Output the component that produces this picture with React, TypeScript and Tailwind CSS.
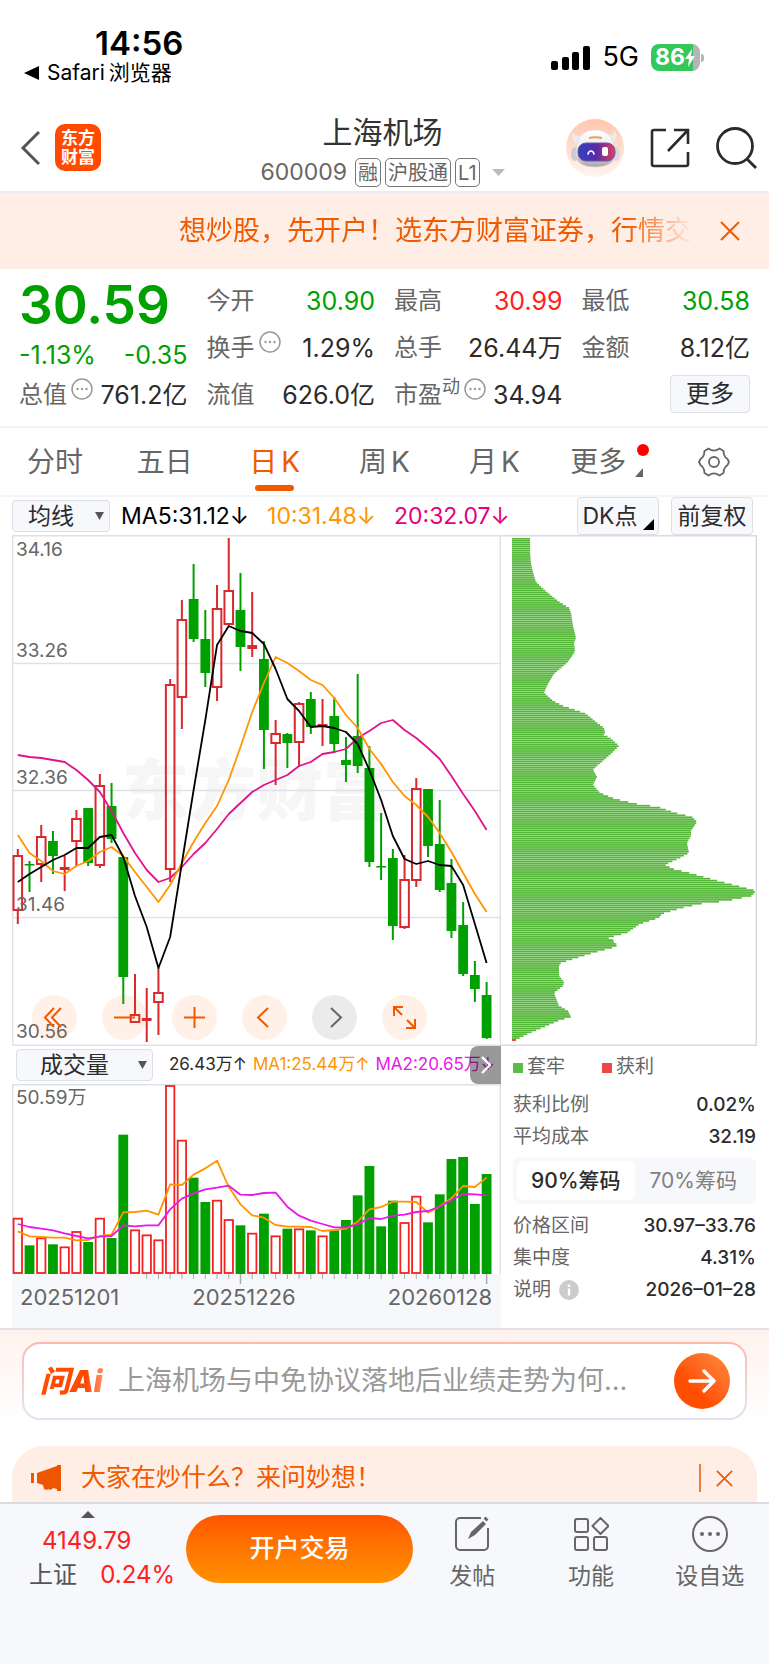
import { useState } from "react"
import type { ReactNode } from "react"

type Candle = [high: number, top: number, bottom: number, low: number, up: 0 | 1]

const STEP = 11.72
const FIRST = 5.8
const BAR = 9
const xAt = (i: number) => FIRST + i * STEP

const candles: Candle[] = [
  [314, 321, 375, 389, 1], [326, 329, 330, 357, 0], [290, 302, 329, 347, 1], [296, 306, 321, 339, 0],
  [321, 332, 335, 356, 1], [275, 284, 306, 331, 1], [273, 273, 328, 331, 0], [239, 251, 330, 333, 1],
  [248, 271, 304, 308, 0], [322, 322, 442, 469, 0], [439, 480, 487, 487, 1], [453, 483, 486, 507, 1],
  [433, 458, 467, 500, 1], [144, 150, 334, 347, 1], [65, 85, 162, 194, 1], [29, 64, 104, 107, 0],
  [75, 104, 138, 152, 0], [50, 74, 152, 166, 1], [3, 56, 89, 90, 1], [38, 75, 112, 136, 0],
  [57, 110, 114, 122, 1], [106, 124, 195, 234, 0], [185, 199, 208, 250, 1], [198, 199, 208, 233, 0],
  [167, 169, 207, 232, 1], [157, 164, 192, 199, 0], [164, 189, 191, 211, 1], [162, 181, 209, 218, 0],
  [202, 225, 230, 247, 0], [139, 201, 231, 238, 0], [211, 233, 327, 332, 0], [278, 331, 332, 345, 0],
  [314, 323, 391, 405, 0], [320, 345, 392, 394, 1], [243, 254, 345, 352, 1], [254, 254, 311, 322, 0],
  [265, 309, 355, 357, 0], [324, 348, 396, 403, 0], [367, 390, 439, 441, 0], [426, 440, 454, 467, 0],
  [447, 460, 503, 504, 0],
]

const ma5 = [347, 339, 332, 325, 320, 313, 313, 302, 300, 322, 361, 392, 433, 402, 328, 255, 185, 110, 91, 96, 98, 109, 134, 164, 176, 192, 191, 193, 197, 209, 235, 265, 301, 324, 329, 326, 330, 331, 350, 389, 428]
const ma10 = [300, 318, 326, 336, 339, 331, 326, 317, 312, 321, 337, 352, 367, 350, 328, 307, 288, 271, 245, 212, 177, 148, 122, 128, 136, 145, 150, 163, 180, 193, 214, 229, 247, 261, 270, 282, 298, 317, 338, 359, 377]
const ma20 = [220, 222, 223, 225, 227, 235, 245, 257, 276, 298, 318, 335, 347, 343, 332, 319, 308, 294, 279, 268, 257, 250, 245, 240, 231, 227, 219, 217, 214, 203, 196, 188, 185, 195, 203, 213, 224, 241, 259, 276, 295]

const volumes = [169, 86, 110, 89, 83, 129, 96, 169, 108, 418, 134, 119, 104, 567, 403, 289, 216, 223, 165, 146, 124, 181, 116, 136, 137, 131, 116, 131, 162, 236, 324, 143, 220, 156, 235, 155, 239, 345, 351, 210, 300]
const volumeMa1 = [128, 113, 111, 109, 109, 101, 102, 114, 118, 185, 186, 190, 178, 269, 267, 298, 317, 340, 261, 209, 176, 169, 147, 142, 142, 141, 129, 132, 136, 157, 194, 201, 217, 217, 216, 184, 203, 227, 264, 261, 289]
const volumeMa2 = [150, 141, 136, 131, 122, 114, 107, 112, 114, 146, 143, 146, 146, 194, 226, 242, 254, 259, 265, 238, 237, 243, 244, 202, 175, 160, 150, 140, 140, 149, 168, 165, 175, 178, 186, 189, 202, 222, 240, 239, 236]

// [y, width] outline of the chip distribution
const chips: [number, number][] = [
  [3, 18], [15, 18], [28, 19], [40, 22], [46, 24], [50, 28], [58, 37], [66, 47], [72, 57], [77, 59],
  [90, 61], [102, 64], [107, 62], [115, 63], [119, 61], [127, 55], [138, 42], [148, 36], [157, 32],
  [165, 41], [170, 51], [175, 66], [178, 74], [187, 85], [192, 92], [197, 93], [198, 90], [202, 98],
  [210, 107], [217, 100], [225, 91], [230, 85], [234, 81], [241, 85], [249, 81], [257, 88], [263, 103],
  [268, 125], [271, 146], [277, 163], [281, 180], [286, 185], [295, 179], [300, 179], [307, 175],
  [317, 177], [322, 168], [329, 153], [333, 161], [338, 181], [345, 206], [352, 233], [355, 244],
  [360, 240], [365, 215], [368, 188], [372, 170], [378, 150], [382, 147], [388, 128], [397, 115],
  [402, 96], [405, 103], [407, 101], [409, 107], [412, 100], [417, 81], [427, 49], [430, 47], [440, 47],
  [446, 52], [450, 51], [457, 42], [470, 47], [475, 56], [481, 59], [485, 46], [492, 30], [498, 16],
  [504, 4],
]

const CHIP_PITCH = 1.92
const chipRows = Array.from({ length: 261 }, (_, n) => {
  const y = 3 + n * CHIP_PITCH
  const k = Math.max(1, chips.findIndex((p) => p[0] >= y))
  const [y0, w0] = chips[k - 1]
  const [y1, w1] = chips[k]
  return { y, w: w0 + ((w1 - w0) * (y - y0)) / (y1 - y0) }
})

const line = (values: number[], toY = (v: number) => v) =>
  values.map((v, i) => `${xAt(i)},${toY(v)}`).join(" ")

const volumeY = (v: number) => 190 - v / 3

const Triangle = ({ className = "" }: { className?: string }) => (
  <svg viewBox="0 0 10 9" preserveAspectRatio="none" className={className} fill="currentColor" aria-hidden="true">
    <path d="M0 0h10L5 9z" />
  </svg>
)

const More = () => (
  <svg viewBox="0 0 22 22" className="mb-3 h-[22px] w-[22px] shrink-0 text-[#999]" aria-hidden="true">
    <circle cx="11" cy="11" r="10" fill="none" stroke="currentColor" strokeWidth="1.5" />
    <g fill="currentColor">
      <circle cx="6.5" cy="11" r="1.2" />
      <circle cx="11" cy="11" r="1.2" />
      <circle cx="15.5" cy="11" r="1.2" />
    </g>
  </svg>
)

const Close = ({ className = "" }: { className?: string }) => (
  <svg viewBox="0 0 20 20" className={className} fill="none" stroke="#f05a00" strokeWidth="2">
    <path d="M1 1l18 18M19 1L1 19" />
  </svg>
)

const StatusBar = () => (
  <div className="flex h-[100px] justify-between pl-6 pr-[65px]">
    <div className="pt-[27px]">
      <p className="pl-[71px] text-[33px] font-semibold leading-8">14:56</p>
      <p className="flex items-center gap-2 text-[21px] leading-7">
        <svg viewBox="0 0 15 14" className="h-[14px] w-[15px]" aria-hidden="true">
          <path d="M15 0v14L0 7z" />
        </svg>
        <span>Safari<span className="ml-1">浏览器</span></span>
      </p>
    </div>
    <div className="mt-11 flex h-[27px] items-center gap-3">
      <svg viewBox="0 0 39 24" className="h-6 w-[39px]" aria-hidden="true">
        <rect x="0" y="15" width="7" height="9" rx="2" />
        <rect x="11" y="11" width="7" height="13" rx="2" />
        <rect x="21" y="6" width="7" height="18" rx="2" />
        <rect x="32" y="0" width="7" height="24" rx="2" />
      </svg>
      <span className="text-[27px]">5G</span>
      <div className="flex items-center gap-px">
        <span className="flex h-[27px] w-[49px] items-center rounded-lg bg-linear-to-r from-[#34c759] from-86% to-[#b5b5b5] to-86% pl-1 text-[23px] font-bold text-white">
          86
          <svg viewBox="0 0 10 18" className="h-[18px] w-[10px]" fill="#fff" aria-hidden="true">
            <path d="M7 0L0 10h4l-1 8 7-11H6z" />
          </svg>
        </span>
        <span className="h-2 w-[3px] rounded-r bg-[#b5b5b5]" />
      </div>
    </div>
  </div>
)

const Robot = () => (
  <svg viewBox="0 0 58 58" className="h-[58px] w-[58px]" aria-hidden="true">
    <defs>
      <linearGradient id="halo" x1="0" y1="0" x2="0" y2="1">
        <stop offset="0" stopColor="#ffc6ac" />
        <stop offset="1" stopColor="#fff5f0" />
      </linearGradient>
      <linearGradient id="shell" x1="0" y1="0" x2="0" y2="1">
        <stop offset="0" stopColor="#ffffff" />
        <stop offset="0.6" stopColor="#eae6ea" />
        <stop offset="1" stopColor="#aaa2ac" />
      </linearGradient>
      <linearGradient id="visor" x1="0" y1="0" x2="1" y2="0">
        <stop offset="0" stopColor="#2e45c4" />
        <stop offset="0.5" stopColor="#5a2aa8" />
        <stop offset="1" stopColor="#e0405f" />
      </linearGradient>
    </defs>
    <circle cx="29" cy="29" r="29" fill="url(#halo)" />
    <path d="M6 13c0 6 1 9 5 12l5-8c-4 1-8-1-10-4zM49 12c3 5 1 9-3 12l-6-7c5 0 8-2 9-5z" fill="#efeaf0" />
    <ellipse cx="9" cy="35" rx="4" ry="7" fill="#cfcad3" />
    <ellipse cx="50" cy="35" rx="4" ry="7" fill="#ddd8e0" />
    <path d="M11 27c1-11 8-16 18-16s18 5 19 16l1 9c0 8-9 12-20 12S10 44 10 36z" fill="url(#shell)" stroke="#ddd5dc" strokeWidth="0.6" />
    <path d="M23 18c4-1 9-1 13 0v2c-4-1-9-1-13 0z" fill="#ee9a52" />
    <rect x="12" y="24" width="37" height="18" rx="8" fill="url(#visor)" stroke="#6b5a9a" strokeWidth="1" />
    <path d="M22 35c1-4 5-4 6 0" fill="none" stroke="#fff" strokeWidth="1.6" strokeLinecap="round" />
    <rect x="36" y="28" width="6" height="9" rx="2" fill="#fff" />
  </svg>
)

const Header = () => (
  <header className="grid h-[93px] grid-cols-[1fr_auto_1fr] items-center border-b-2 border-[#ececee] pl-5 pr-3 pt-1">
    <div className="flex items-center gap-[15px]">
      <button aria-label="返回">
        <svg viewBox="0 0 20 34" className="h-[34px] w-5" fill="none" stroke="#555" strokeWidth="3">
          <path d="M19 1L3 17l16 16" />
        </svg>
      </button>
      <div className="grid h-[47px] w-[46px] place-items-center content-center rounded-[10px] bg-[#ff4a00] text-[17px] font-bold leading-[19px] text-white">
        <span>东方</span>
        <span>财富</span>
      </div>
    </div>
    <div className="flex flex-col items-center pr-3 pt-1">
      <h1 className="text-[30px] leading-[46px] text-[#333]">上海机场</h1>
      <div className="flex h-9 items-center gap-1 text-[20px] text-[#666]">
        <span className="mr-1 text-[23px]">600009</span>
        {["融", "沪股通", "L1"].map((tag) => (
          <span key={tag} className="flex h-[29px] items-center rounded-[5px] border-[1.5px] border-[#777] px-0.5">
            {tag}
          </span>
        ))}
        <Triangle className="ml-2 h-[7px] w-[13px] text-[#bbb]" />
      </div>
    </div>
    <div className="flex items-center justify-end gap-[26px]">
      <button aria-label="智能助手">
        <Robot />
      </button>
      <button aria-label="分享">
        <svg viewBox="0 0 40 40" className="h-10 w-10" fill="none" stroke="#2b2b2b" strokeWidth="2.6">
          <path d="M16 2H4a2 2 0 0 0-2 2v32a2 2 0 0 0 2 2h32a2 2 0 0 0 2-2V24M24 2h14v14M38 2L18 23" />
        </svg>
      </button>
      <button aria-label="搜索">
        <svg viewBox="0 0 41 42" className="h-[42px] w-[41px]" fill="none" stroke="#2b2b2b" strokeWidth="2.8">
          <circle cx="19" cy="19" r="17.5" />
          <path d="M31 32l9 9" />
        </svg>
      </button>
    </div>
  </header>
)

const Banner = () => (
  <div className="flex h-[76px] items-center justify-between bg-[#feeee6] pl-[179px] pr-[29px]">
    <a
      href="#open"
      className="min-w-0 flex-1 overflow-hidden whitespace-nowrap text-[27px] text-[#f05a00] [mask-image:linear-gradient(to_right,black_87%,transparent)]"
    >
      想炒股，先开户！选东方财富证券，行情交
    </a>
    <button aria-label="关闭" className="ml-7">
      <Close className="h-5 w-5" />
    </button>
  </div>
)

const Stat = ({ label, value, color = "text-[#2b2b2b]" }: { label: ReactNode; value: string; color?: string }) => (
  <div className="flex h-[47px] items-center justify-between whitespace-nowrap">
    <dt className="flex items-center text-[#666]">{label}</dt>
    <dd className={`text-[25px] ${color}`}>{value}</dd>
  </div>
)

const Quote = () => (
  <section className="grid grid-cols-4 gap-x-[19px] border-b-2 border-[#f2f3f6] px-[19px] py-2 text-[24px] leading-8">
    <div>
      <p className="h-[57px] text-[53px] font-semibold leading-[57px] text-[#00a000]">30.59</p>
      <p className="flex h-[37px] items-center justify-between pt-1 text-[25px] text-[#00a000]">
        <span>-1.13%</span>
        <span>-0.35</span>
      </p>
      <dl>
        <Stat label={<><span className="mr-1">总值</span><More /></>} value="761.2亿" />
      </dl>
    </div>
    <dl>
      <Stat label="今开" value="30.90" color="text-[#00a000]" />
      <Stat label={<><span className="mr-1">换手</span><More /></>} value="1.29%" />
      <Stat label="流值" value="626.0亿" />
    </dl>
    <dl>
      <Stat label="最高" value="30.99" color="text-[#ff2020]" />
      <Stat label="总手" value="26.44万" />
      <Stat
        label={<>市盈<span className="mb-4 mr-1 text-[18px] leading-5">动</span><More /></>}
        value="34.94"
      />
    </dl>
    <div>
      <dl>
        <Stat label="最低" value="30.58" color="text-[#00a000]" />
        <Stat label="金额" value="8.12亿" />
      </dl>
      <button className="ml-auto mt-1 block h-[38px] w-20 rounded border border-[#dcdfe6] bg-[#f7f8fb] text-[#2b2b2b]">
        更多
      </button>
    </div>
  </section>
)

const tabs = ["分时", "五日", "日K", "周K", "月K", "更多"]

const PeriodTabs = () => {
  const [active, setActive] = useState("日K")

  return (
    <nav className="grid h-[69px] grid-cols-7 border-b-2 border-[#f5f5f8] text-[28px] text-[#666]">
      {tabs.map((tab) => (
        <button
          key={tab}
          onClick={() => setActive(tab)}
          className={`relative flex items-center justify-center ${tab === active ? "text-[#f05a00]" : ""} ${tab === "更多" ? "pr-3" : ""}`}
        >
          {tab.endsWith("K") ? <>{tab[0]}<span className="ml-1">K</span></> : tab}
          {tab === active && <span className="absolute bottom-1 h-[6px] w-[39px] rounded-full bg-[#f05a00]" />}
          {tab === "更多" && (
            <>
              <span className="absolute right-[10px] top-4 h-3 w-3 rounded-full bg-[#ff0000]" />
              <svg viewBox="0 0 8 9" className="absolute bottom-[18px] right-4 h-[9px] w-2" fill="#666" aria-hidden="true">
                <path d="M8 0v9H0z" />
              </svg>
            </>
          )}
        </button>
      ))}
      <button aria-label="设置" className="grid place-items-center">
        <svg viewBox="0 0 32 30" className="h-[30px] w-8" fill="none" stroke="#666" strokeWidth="1.8" strokeLinejoin="round">
          <path d="M10.500 1.500L13.500 3.200Q16 4 18.500 3.200L21.500 1.500L25.500 4L26 7.500Q27 10.500 29.500 12L31 15L29.500 18Q27 19.500 26 22.500L25.500 26L21.500 28.500L18.500 26.800Q16 26 13.500 26.800L10.500 28.500L6.500 26L6 22.500Q5 19.500 2.500 18L1 15L2.500 12Q5 10.500 6 7.500L6.500 4Z" />
          <circle cx="16" cy="15" r="5" />
        </svg>
      </button>
    </nav>
  )
}

const IndicatorSelect = ({ label, value, className }: { label: string; value: string; className: string }) => (
  <div className={`relative flex items-center ${className}`}>
    <select
      aria-label={label}
      className="h-full w-full appearance-none rounded border-[1.5px] border-[#dcdfe6] bg-[#f7f8fb] pr-5 text-center text-[23px] leading-7 text-[#2b2b2b]"
    >
      <option>{value}</option>
    </select>
    <Triangle className="pointer-events-none absolute right-[6px] h-2 w-[9px] text-[#555]" />
  </div>
)

const AverageRow = () => (
  <div className="mx-3 flex h-[38px] items-center whitespace-nowrap text-[23px]">
    <IndicatorSelect label="主图指标" value="均线" className="h-8 w-[98px]" />
    <span className="ml-[11px]">MA5:31.12↓</span>
    <span className="ml-[18px] text-[#ff9500]">10:31.48↓</span>
    <span className="ml-[18px] text-[#e6007e]">20:32.07↓</span>
    <button className="relative ml-auto h-[38px] w-[82px] rounded border-[1.5px] border-[#dcdfe6] bg-[#f7f8fb] pr-4 text-[#2b2b2b]">
      DK点
      <svg viewBox="0 0 11 11" className="absolute bottom-1 right-1 h-[11px] w-[11px]" aria-hidden="true">
        <path d="M11 0v11H0z" />
      </svg>
    </button>
    <button className="ml-3 mr-1 h-[38px] w-[82px] rounded border-[1.5px] border-[#dcdfe6] bg-[#f7f8fb] text-[#2b2b2b]">
      前复权
    </button>
  </div>
)

const CandleChart = () => (
  <svg viewBox="0 0 489 511" className="block h-auto w-full" role="img" aria-label="日K线">
    <text x="110" y="280" fontSize="67" fontWeight="900" fill="#f6f6f6">东方财富</text>
    <g stroke="#dde1ea" strokeWidth="1.500">
      <path d="M0 .7h489M0 128.500h489M0 255.500h489M0 382.500h489M0 510.300h489M.7 0v511M488.300 0v511" />
    </g>
    {candles.map(([high, top, bottom, low, up], i) => {
      const x = xAt(i)
      const color = up ? "#d8292f" : "#00a000"
      const hollow = up === 1 && bottom - top > 5
      return (
        <g key={i} stroke={color} strokeWidth="2">
          <path d={hollow ? `M${x} ${high}V${top}M${x} ${bottom}V${low}` : `M${x} ${high}V${low}`} />
          {hollow ? (
            <rect x={x - BAR / 2 + 0.2} y={top} width={BAR - 0.4} height={bottom - top} fill="none" />
          ) : (
            <rect x={x - BAR / 2 - 0.4} y={top} width={BAR + 0.8} height={Math.max(1.5, bottom - top)} fill={color} stroke="none" />
          )}
        </g>
      )
    })}
    <g fill="none" strokeWidth="1.800" strokeLinejoin="round">
      <polyline points={line(ma20)} stroke="#e0148c" />
      <polyline points={line(ma10)} stroke="#ff9500" />
      <polyline points={line(ma5)} stroke="#000" />
    </g>
    <g fontSize="19" fill="#666">
      <text x="4" y="21">34.16</text>
      <text x="4" y="122">33.26</text>
      <text x="4" y="249">32.36</text>
      <text x="4" y="376">31.46</text>
      <text x="4" y="503">30.56</text>
    </g>
  </svg>
)

const controls: { label: string; path: string; muted?: boolean }[] = [
  { label: "展开", path: "M22 13L13 22.500L22 32M29 13L20 22.500L29 32" },
  { label: "缩小", path: "M12 22.500h21" },
  { label: "放大", path: "M12 22.500h21M22.500 12v21" },
  { label: "左移", path: "M26 13L16 22.500L26 32" },
  { label: "右移", path: "M19 13L29 22.500L19 32", muted: true },
  { label: "全屏", path: "M12 21V12h9M12 12l8 8M33 24v9h-9M33 33l-8-8" },
]

const ChartControls = () => (
  <div className="absolute bottom-[6px] left-5 flex gap-[25px]">
    {controls.map(({ label, path, muted }) => (
      <button
        key={label}
        aria-label={label}
        className={`h-[45px] w-[45px] rounded-full ${muted ? "bg-black/8 text-[#666]" : "bg-[#ff5a00]/9 text-[#f05a00]"}`}
      >
        <svg viewBox="0 0 45 45" fill="none" stroke="currentColor" strokeWidth="2">
          <path d={path} />
        </svg>
      </button>
    ))}
  </div>
)

const VolumeChart = () => (
  <svg viewBox="0 0 489 190" className="block h-auto w-full" role="img" aria-label="成交量">
    <path d="M0 .7h489M.7 0v190M488.300 0v190" stroke="#dde1ea" strokeWidth="1.500" />
    {volumes.map((v, i) => {
      const up = candles[i][4] === 1
      const h = v / 3
      return up ? (
        <rect key={i} x={xAt(i) - 4.2} y={191 - h} width="8.400" height={h - 2} fill="#fff" stroke="#f52222" strokeWidth="1.800" />
      ) : (
        <rect key={i} x={xAt(i) - 4.9} y={190 - h} width="9.800" height={h} fill="#00a000" />
      )
    })}
    <g fill="none" strokeWidth="1.800" strokeLinejoin="round">
      <polyline points={line(volumeMa1, volumeY)} stroke="#ff9500" />
      <polyline points={line(volumeMa2, volumeY)} stroke="#e619e6" />
    </g>
    <text x="4" y="20" fontSize="19" fill="#666">50.59万</text>
  </svg>
)

const DateAxis = () => (
  <div className="h-[54px] bg-[#f7f8fb]">
    <svg viewBox="0 0 489 10" className="block h-auto w-full" stroke="#aaa" aria-hidden="true">
      {volumes.map((_, i) => i > 10 && (
        <path key={i} d={`M${xAt(i)} 0V${i === 19 || i === 40 ? 10 : 5}`} strokeWidth={i === 19 || i === 40 ? 1.5 : 1} />
      ))}
    </svg>
    <div className="grid grid-cols-[1fr_auto_1fr] pl-2 pr-[9px] text-[22px] leading-[26px] text-[#666]">
      <span>20251201</span>
      <span className="pr-6">20251226</span>
      <span className="text-right">20260128</span>
    </div>
  </div>
)

const ChipChart = () => (
  <svg viewBox="0 0 256 511" className="block h-auto w-full" role="img" aria-label="筹码分布">
    <path d="M0 .7h255.300V510.300H0" fill="none" stroke="#d9dae2" strokeWidth="1.500" />
    <g fill="#55b83a">
      {chipRows.map(({ y, w }) => (
        <rect key={y} x="11" y={y} width={w} height="1.700" />
      ))}
    </g>
    <rect x="11" y="504" width="4" height="2" fill="#ee4646" />
  </svg>
)

const InfoRow = ({ label, value }: { label: ReactNode; value: string }) => (
  <div className="flex h-8 items-center justify-between">
    <dt className="flex items-center gap-2 text-[#666]">{label}</dt>
    <dd className="font-medium text-[#2b2b2b]">{value}</dd>
  </div>
)

const ChipPanel = () => {
  const [range, setRange] = useState("90%筹码")

  return (
    <div className="pl-3 pr-px text-[19px]">
      <div className="flex h-[43px] items-center gap-[37px] text-[#666]">
        <span className="flex items-center gap-1">
          <i className="h-[10px] w-[10px] bg-[#5bbd46]" />套牢
        </span>
        <span className="flex items-center gap-1">
          <i className="h-[10px] w-[10px] bg-[#ee4646]" />获利
        </span>
      </div>
      <dl>
        <InfoRow label="获利比例" value="0.02%" />
        <InfoRow label="平均成本" value="32.19" />
      </dl>
      <div className="mb-[6px] mt-1 flex h-[47px] rounded-lg bg-[#f7f8fb] p-1 text-[21px]">
        {["90%筹码", "70%筹码"].map((item) => (
          <button
            key={item}
            onClick={() => setRange(item)}
            className={`flex-1 rounded-md ${item === range ? "bg-white font-medium text-[#2b2b2b]" : "text-[#808080]"}`}
          >
            {item}
          </button>
        ))}
      </div>
      <dl>
        <InfoRow label="价格区间" value="30.97–33.76" />
        <InfoRow label="集中度" value="4.31%" />
        <InfoRow
          label={
            <>
              说明
              <svg viewBox="0 0 20 20" className="h-5 w-5" aria-hidden="true">
                <circle cx="10" cy="10" r="10" fill="#ccc" />
                <path d="M10 4.500v2.500M10 8.500v7" stroke="#fff" strokeWidth="2.400" />
              </svg>
            </>
          }
          value="2026–01–28"
        />
      </dl>
    </div>
  )
}

const Charts = () => (
  <section className="mx-3 grid grid-cols-[489fr_256fr]">
    <div>
      <div className="relative">
        <CandleChart />
        <ChartControls />
      </div>
      <div className="relative flex h-[38px] items-center overflow-hidden whitespace-nowrap pl-1 text-[17px]">
        <IndicatorSelect label="副图指标" value="成交量" className="h-8 w-[137px]" />
        <span className="ml-4 text-[#2b2b2b]">26.43万↑</span>
        <span className="ml-[6px] text-[#ff9500]">MA1:25.44万↑</span>
        <span className="ml-[6px] text-[#e619e6]">MA2:20.65万↓</span>
        <button aria-label="更多指标" className="absolute inset-y-0 right-0 grid w-[31px] place-items-center rounded-l-lg bg-black/40">
          <svg viewBox="0 0 10 18" className="h-[18px] w-[10px]" fill="none" stroke="#fff" strokeWidth="2.400">
            <path d="M1 1l8 8-8 8" />
          </svg>
        </button>
      </div>
      <VolumeChart />
      <DateAxis />
    </div>
    <div>
      <ChipChart />
      <ChipPanel />
    </div>
  </section>
)

const AskBox = () => (
  <section className="border-t-2 border-[#e4e0e6] bg-linear-to-b from-[#fff2ee] to-white to-80% px-[22px] pb-[26px] pt-3">
    <div className="rounded-[18px] bg-linear-to-b from-[#ffb9ad] to-[#dce5f6] p-0.5">
      <form className="flex h-[74px] items-center rounded-2xl bg-white pl-4 pr-[15px]" onSubmit={(e) => e.preventDefault()}>
        <label
          htmlFor="ask"
          className="w-[78px] shrink-0 bg-linear-to-r from-[#ff4a00] from-60% to-[#ff9a66] to-85% bg-clip-text text-[30px] font-black italic text-transparent"
        >
          问Ai
        </label>
        <input
          id="ask"
          placeholder="上海机场与中免协议落地后业绩走势为何…"
          className="min-w-0 flex-1 text-[27px] outline-none placeholder:text-[#999]"
        />
        <button aria-label="发送" className="ml-9 grid h-14 w-14 shrink-0 place-items-center rounded-full bg-linear-to-bl from-[#ff8a3c] to-[#ff4e00] to-65%">
          <svg viewBox="0 0 28 24" className="h-6 w-7" fill="none" stroke="#fff" strokeWidth="3.400" strokeLinecap="round" strokeLinejoin="round">
            <path d="M2 12h23M16 2l10 10-10 10" />
          </svg>
        </button>
      </form>
    </div>
  </section>
)

const Notice = () => (
  <div className="mx-3 flex h-14 items-center rounded-t-[32px] bg-[#feeee6] pl-[19px] pr-6 pt-2 text-[25px] text-[#f05a00]">
    <svg viewBox="0 0 30 26" className="h-[26px] w-[30px]" fill="#ee5500" aria-hidden="true">
      <path d="M0 8h3v10H0zM6 8L26 1V0h4v26h-4v-2l-4-1-2 2-3-1-1 1-3-1-1-4-6-2z" />
    </svg>
    <a href="#ask" className="ml-5 flex-1">大家在炒什么？来问妙想！</a>
    <span className="mr-[15px] h-7 w-0.5 bg-[#f07a3c]" />
    <button aria-label="关闭">
      <Close className="block h-[17px] w-[17px]" />
    </button>
  </div>
)

const actions = [
  {
    label: "发帖",
    icon: (
      <>
        <path d="M27 2H6a4 4 0 0 0-4 4v24a4 4 0 0 0 4 4h24a4 4 0 0 0 4-4V12" />
        <path d="M14 23l3-7L29 5l3 3-11 11z" fill="currentColor" stroke="none" />
        <path d="M31 4l2-2" strokeWidth="4" />
      </>
    ),
  },
  {
    label: "功能",
    icon: (
      <>
        <rect x="2" y="3" width="13" height="13" rx="2" />
        <rect x="2" y="21" width="13" height="13" rx="2" />
        <rect x="21" y="21" width="13" height="13" rx="2" />
        <path d="M27.500 2l8 8-8 8-8-8z" strokeLinejoin="round" />
      </>
    ),
  },
  {
    label: "设自选",
    icon: (
      <>
        <circle cx="18" cy="18" r="17" />
        <g fill="currentColor" stroke="none">
          <circle cx="10" cy="18" r="2" />
          <circle cx="18" cy="18" r="2" />
          <circle cx="26" cy="18" r="2" />
        </g>
      </>
    ),
  },
]

const BottomBar = () => (
  <footer className="flex min-h-[162px] items-start border-t-2 border-[#d9dbe0] bg-[#f7f8fb] pl-[29px] text-[24px]">
    <button className="flex w-[146px] flex-col pt-[7px] text-left">
      <Triangle className="ml-[52px] h-[7px] w-[14px] rotate-180 text-[#555]" />
      <span className="ml-[13px] mt-[6px] leading-[34px] text-[#ff2020]">4149.79</span>
      <span className="flex justify-between leading-[34px] text-[#555]">
        上证 <span className="text-[#ff2020]">0.24%</span>
      </span>
    </button>
    <button className="ml-[11px] mt-[11px] h-[68px] w-[227px] rounded-full bg-linear-to-b from-[#ff5500] to-[#ff9100] text-[25px] font-medium text-white">
      开户交易
    </button>
    <div className="grid flex-1 grid-cols-3 pt-3 text-[23px] text-[#666]">
      {actions.map(({ label, icon }) => (
        <button key={label} className="flex flex-col items-center">
          <svg viewBox="0 0 36 36" className="h-9 w-9" fill="none" stroke="currentColor" strokeWidth="2">
            {icon}
          </svg>
          <span className="mt-[7px] leading-[34px]">{label}</span>
        </button>
      ))}
    </div>
  </footer>
)

const App = () => (
  <main lang="zh-CN" className="min-h-screen bg-white font-['Inter','Noto_Sans_CJK_SC',sans-serif] text-black">
    <StatusBar />
    <Header />
    <Banner />
    <Quote />
    <PeriodTabs />
    <AverageRow />
    <Charts />
    <AskBox />
    <Notice />
    <BottomBar />
  </main>
)

export default App
